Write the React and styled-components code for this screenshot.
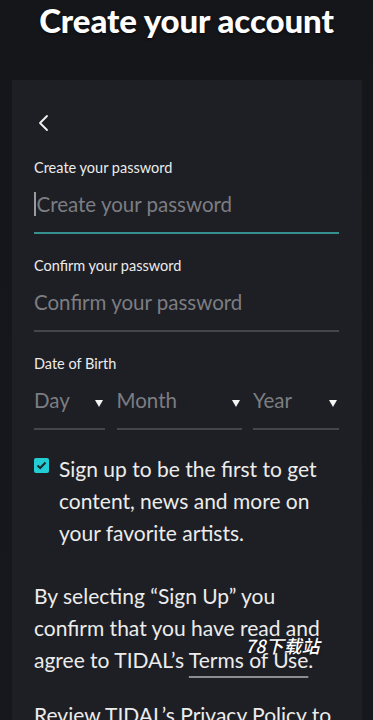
import React from "react";
import styled, { createGlobalStyle } from "styled-components";

const GlobalStyle = createGlobalStyle`
    html, body {
        margin: 0;
        padding: 0;
        background: #16171b;
        overflow: hidden;
    }
    body {
        font-family: "Lato", "Open Sans", sans-serif;
        -webkit-font-smoothing: antialiased;
    }
`;

const Page = styled.div`
    position: relative;
    min-height: 720px;
    background: linear-gradient(180deg, #15161a 0%, #17181d 100%);
    overflow: hidden;
`;

const Title = styled.h1`
    margin: 0;
    text-align: center;
    color: #ffffff;
    font-size: 33px;
    font-weight: 900;
    line-height: 40px;
    letter-spacing: -0.1px;
    text-shadow: 0 1px 3px rgba(0, 0, 0, 0.6);
`;

const Card = styled.div`
    margin: 40px 11px 0 12px;
    padding: 31px 23px 40px 22px;
    background: #1e1f24;
    min-height: 700px;
`;

const BackButton = styled.button`
    display: block;
    width: 24px;
    height: 24px;
    padding: 0;
    margin: 0 0 24px 2px;
    border: none;
    background: none;
    color: #f2f2f2;
`;

const Field = styled.div`
    margin-bottom: 23px;
`;

const Label = styled.div`
    color: #ececec;
    font-size: 14.5px;
    line-height: 18px;
`;

const InputRow = styled.div`
    display: flex;
    align-items: center;
    padding: 13px 0 14px;
    border-bottom: 2px solid ${(p) => (p.focused ? "#36908f" : "#45464b")};
`;

const Cursor = styled.span`
    width: 1.5px;
    height: 24px;
    background: #9a9ba0;
    margin-right: 1px;
`;

const Placeholder = styled.span`
    color: #7c7d82;
    font-size: 20.5px;
    line-height: 28px;
`;

const SelectGrid = styled.div`
    display: grid;
    grid-template-columns: 71fr 125fr 86fr;
    column-gap: 11.5px;
`;

const Select = styled.div`
    display: flex;
    align-items: center;
    justify-content: space-between;
    padding: 13px 2px 14px 0;
    border-bottom: 2px solid #45464b;
`;

const Caret = styled.span`
    width: 0;
    height: 0;
    margin-top: 6px;
    border-left: 4.5px solid transparent;
    border-right: 4.5px solid transparent;
    border-top: 7px solid #f5f5f5;
`;

const CheckRow = styled.div`
    display: flex;
    align-items: flex-start;
    gap: 10px;
    color: #ececec;
    font-size: 21px;
    line-height: 32px;
`;

const Box = styled.span`
    flex: none;
    display: flex;
    align-items: center;
    justify-content: center;
    width: 15px;
    height: 15px;
    margin-top: 5px;
    border-radius: 2px;
    background: #22cdd4;
`;

const Paragraph = styled.p`
    margin: ${(p) => (p.first ? "31px" : "0")} 0 23px;
    color: #ececec;
    font-size: 21px;
    line-height: 32px;
`;

const Link = styled.span`
    text-decoration: underline;
    text-decoration-color: #8c8d91;
    text-decoration-thickness: 2px;
    text-underline-offset: 8px;
`;

const Watermark = styled.div`
    position: absolute;
    left: 245px;
    top: 634px;
    color: #ffffff;
    font-family: "Noto Sans CJK SC", sans-serif;
    font-size: 18px;
    font-weight: 500;
    font-style: italic;
    line-height: 22px;
    text-shadow: 0 0 2px rgba(0, 0, 0, 0.8);
`;

function Chevron() {
    return (
        <svg width="24" height="24" viewBox="0 0 24 24" fill="none">
            <path
                d="M11 5 L4 12 L11 19"
                stroke="currentColor"
                strokeWidth="1.8"
                strokeLinecap="round"
                strokeLinejoin="round"
            />
        </svg>
    );
}

const fields = [
    { label: "Create your password", focused: true },
    { label: "Confirm your password", focused: false },
];

export default function App() {
    return (
        <>
            <GlobalStyle />
            <Page>
                <Title>Create your account</Title>
                <Card>
                    <BackButton aria-label="Back">
                        <Chevron />
                    </BackButton>

                    {fields.map((f) => (
                        <Field key={f.label}>
                            <Label>{f.label}</Label>
                            <InputRow focused={f.focused}>
                                {f.focused && <Cursor />}
                                <Placeholder>{f.label}</Placeholder>
                            </InputRow>
                        </Field>
                    ))}

                    <Field>
                        <Label>Date of Birth</Label>
                        <SelectGrid>
                            {["Day", "Month", "Year"].map((s) => (
                                <Select key={s}>
                                    <Placeholder>{s}</Placeholder>
                                    <Caret />
                                </Select>
                            ))}
                        </SelectGrid>
                    </Field>

                    <CheckRow>
                        <Box>
                            <svg width="11" height="9" viewBox="0 0 11 9">
                                <path
                                    d="M1.5 4.5 L4.2 7 L9.5 1.5"
                                    stroke="#1b2a30"
                                    strokeWidth="2"
                                    fill="none"
                                />
                            </svg>
                        </Box>
                        <span>
                            Sign up to be the first to get content, news and
                            more on your favorite artists.
                        </span>
                    </CheckRow>

                    <Paragraph first>
                        By selecting “Sign Up” you confirm that you have read
                        and agree to TIDAL’s <Link>Terms of Use</Link>.
                    </Paragraph>
                    <Paragraph>
                        Review TIDAL’s Privacy Policy to learn how we use your
                        data.
                    </Paragraph>
                </Card>
                <Watermark>78下载站</Watermark>
            </Page>
        </>
    );
}
